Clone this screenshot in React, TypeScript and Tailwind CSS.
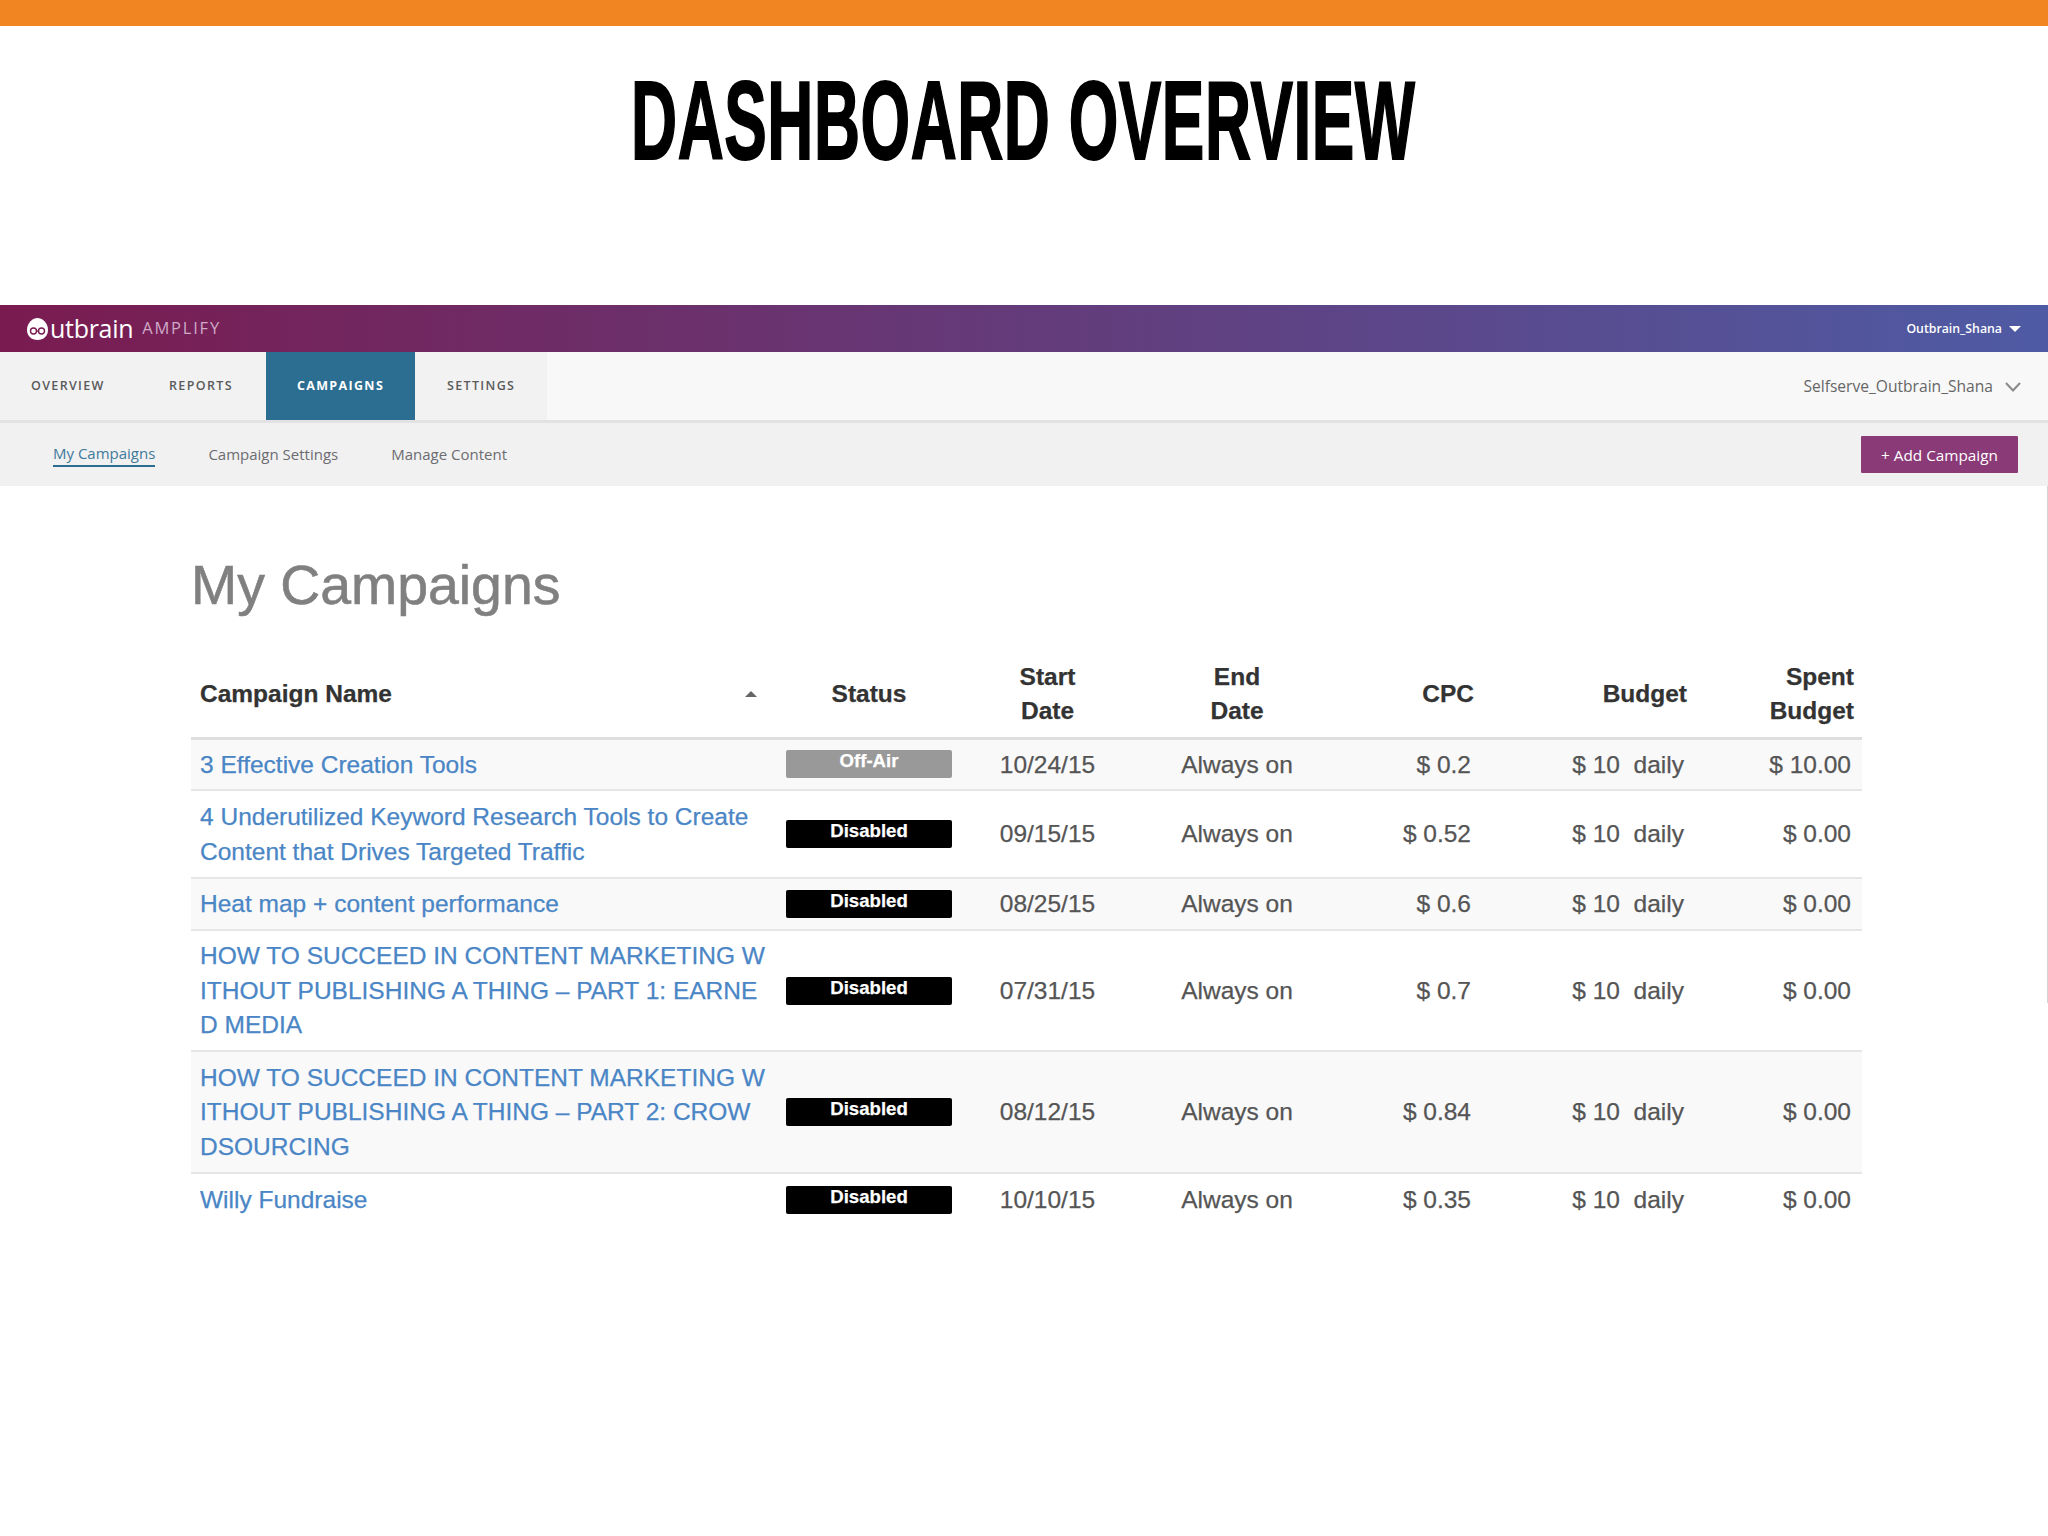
import React from "react";

type Row = { name: string; status: string; start: string; cpc: string; spent: string; h: string; stripe: boolean };

const rows: Row[] = [
  { name: "3 Effective Creation Tools", status: "Off-Air", start: "10/24/15", cpc: "$ 0.2", spent: "$ 10.00", h: "h-[52px]", stripe: true },
  { name: "4 Underutilized Keyword Research Tools to Create Content that Drives Targeted Traffic", status: "Disabled", start: "09/15/15", cpc: "$ 0.52", spent: "$ 0.00", h: "h-[88px]", stripe: false },
  { name: "Heat map + content performance", status: "Disabled", start: "08/25/15", cpc: "$ 0.6", spent: "$ 0.00", h: "h-[52px]", stripe: true },
  { name: "HOW TO SUCCEED IN CONTENT MARKETING WITHOUT PUBLISHING A THING – PART 1: EARNED MEDIA", status: "Disabled", start: "07/31/15", cpc: "$ 0.7", spent: "$ 0.00", h: "h-[121px]", stripe: false },
  { name: "HOW TO SUCCEED IN CONTENT MARKETING WITHOUT PUBLISHING A THING – PART 2: CROWDSOURCING", status: "Disabled", start: "08/12/15", cpc: "$ 0.84", spent: "$ 0.00", h: "h-[122px]", stripe: true },
  { name: "Willy Fundraise", status: "Disabled", start: "10/10/15", cpc: "$ 0.35", spent: "$ 0.00", h: "h-[52px]", stripe: false },
];

function Logo() {
  return (
    <div className="flex items-center">
      <svg width="23" height="24" viewBox="0 0 23 24" className="mr-[1px]">
        <path d="M11.5 1 C16 1 22 5.5 22 13 C22 19 17.5 23 11.5 23 C5.5 23 1 19 1 13 C1 5.5 7 1 11.5 1 Z" fill="#ffffff" />
        <circle cx="7.5" cy="14" r="3" fill="none" stroke="#7a1b50" strokeWidth="1.4" />
        <circle cx="15.5" cy="14" r="3" fill="none" stroke="#7a1b50" strokeWidth="1.4" />
        <path d="M10.5 14 H12.5" stroke="#7a1b50" strokeWidth="1.2" />
      </svg>
      <span className="font-['Open_Sans',sans-serif] text-[25px] leading-none font-medium tracking-[-0.3px] text-white">utbrain</span>
      <span className="ml-[9px] font-['Open_Sans',sans-serif] text-[16.5px] leading-none tracking-[1.8px] text-[#cfa9c6]">AMPLIFY</span>
    </div>
  );
}

function Badge({ label }: { label: string }) {
  const bg = label === "Off-Air" ? "bg-[#999999]" : "bg-black";
  return (
    <div className={`mx-auto flex h-[28px] w-[166px] items-start justify-center rounded-[2px] text-[18.6px] leading-[22px] font-bold text-white ${bg}`}>
      {label}
    </div>
  );
}

export default function App() {
  return (
    <div className="relative h-[1536px] w-full overflow-hidden bg-white font-['Liberation_Sans',Arial,sans-serif]">
      <div className="h-[26px] bg-[#f08522]" />
      <div className="flex h-[279px] justify-center overflow-hidden pt-[31px]">
        <h1 className="origin-top -translate-x-[1px] scale-x-[0.574] text-[111px] leading-[128px] font-bold tracking-[1px] whitespace-nowrap text-black [-webkit-text-stroke:2px_black]">
          DASHBOARD OVERVIEW
        </h1>
      </div>

      <header className="flex h-[47px] items-center justify-between bg-linear-to-r/srgb from-[#7a1b50] to-[#4e5ba4] pr-[27px] pl-[26px]">
        <Logo />
        <div className="flex items-center gap-[7px] pt-[1px] font-['Open_Sans',sans-serif] text-[12.3px] font-semibold text-white">
          <span>Outbrain_Shana</span>
          <span className="h-0 w-0 border-x-[6px] border-t-[6px] border-x-transparent border-t-white" />
        </div>
      </header>

      <nav className="flex h-[71px] justify-between border-b-[3px] border-[#e2e2e4] bg-[#f8f8f8] font-['Open_Sans',sans-serif]">
        <div className="flex h-[68px] w-[547px] items-stretch bg-[#f2f2f3] pt-[1px] text-[12.5px] font-semibold tracking-[1.35px] text-[#5a5a5a]">
          <a className="flex w-[137px] items-center pl-[31px]">OVERVIEW</a>
          <a className="flex w-[129px] items-center pl-[32px]">REPORTS</a>
          <a className="-mt-[1px] flex w-[149px] items-center justify-center bg-[#2c6e91] pt-[1px] font-bold text-white">CAMPAIGNS</a>
          <a className="flex items-center pl-[32px]">SETTINGS</a>
        </div>
        <div className="flex h-[68px] items-center gap-[12px] pt-[1px] pr-[27px] text-[15.6px] text-[#666666]">
          <span>Selfserve_Outbrain_Shana</span>
          <svg width="16" height="10" viewBox="0 0 16 10" fill="none" stroke="#8a8a8a" strokeWidth="2">
            <path d="M1 1 L8 8.5 L15 1" />
          </svg>
        </div>
      </nav>

      <div className="flex h-[63px] items-center justify-between bg-[#f1f1f2] pr-[30px] pl-[53px] font-['Open_Sans',sans-serif] text-[15px] text-[#6c6c70]">
        <div className="flex items-center gap-[53px]">
          <a className="border-b-2 border-[#2c6e91] leading-[23px] text-[#3f7a9c]">My Campaigns</a>
          <a className="-mt-[1px] leading-[24px]">Campaign Settings</a>
          <a className="-mt-[1px] leading-[24px]">Manage Content</a>
        </div>
        <button className="h-[37px] w-[157px] rounded-[1px] bg-[#8b3a78] pt-[1px] text-[15.3px] text-white">+ Add Campaign</button>
      </div>

      <main className="pr-[186px] pl-[191px]">
        <h2 className="mt-[66px] mb-[34px] text-[55.4px] leading-[66px] font-medium text-[#808080] [-webkit-text-stroke:0.6px_#808080]">My Campaigns</h2>
        <table className="w-[1671px] table-fixed text-[24.5px] leading-[34.4px] text-[#555555] [-webkit-text-stroke-width:0.25px]">
          <colgroup>
            <col className="w-[584px]" />
            <col className="w-[188px]" />
            <col className="w-[168px]" />
            <col className="w-[212px]" />
            <col className="w-[140px]" />
            <col className="w-[214px]" />
            <col className="w-[165px]" />
          </colgroup>
          <thead>
            <tr className="h-[86px] border-b-[3px] border-[#dedee1] font-bold text-[#333333]">
              <th className="pl-[9px] text-left font-bold">
                <div className="flex items-center justify-between pr-[18px]">
                  <span>Campaign Name</span>
                  <span className="h-0 w-0 border-x-[6px] border-b-[6px] border-x-transparent border-b-[#666666]" />
                </div>
              </th>
              <th className="text-center font-bold">Status</th>
              <th className="pl-[1px] text-center font-bold">Start<br />Date</th>
              <th className="text-center font-bold">End<br />Date</th>
              <th className="pr-[9px] text-right font-bold">CPC</th>
              <th className="pr-[10px] text-right font-bold">Budget</th>
              <th className="pr-[8px] text-right font-bold">Spent<br />Budget</th>
            </tr>
          </thead>
          <tbody>
            {rows.map((r, i) => (
              <tr
                key={i}
                className={`${r.h} ${r.stripe ? "bg-[#f9f9fa]" : "bg-white"} ${i < rows.length - 1 ? "border-b-2 border-[#e6e6e9]" : ""}`}
              >
                <td className="pt-[1px] pr-[8px] pl-[9px] break-all text-[#4a86c5]">
                  <a>{r.name}</a>
                </td>
                <td>
                  <Badge label={r.status} />
                </td>
                <td className="pt-[1px] pl-[1px] text-center">{r.start}</td>
                <td className="pt-[1px] text-center">Always on</td>
                <td className="pt-[1px] pr-[12px] text-right">{r.cpc}</td>
                <td className="pt-[1px] pr-[13px] text-right whitespace-pre">{"$ 10  daily"}</td>
                <td className="pt-[1px] pr-[11px] text-right">{r.spent}</td>
              </tr>
            ))}
          </tbody>
        </table>
      </main>

      <div className="absolute top-[486px] right-0 h-[517px] w-[1px] bg-[#d4d4d6]" />
    </div>
  );
}
